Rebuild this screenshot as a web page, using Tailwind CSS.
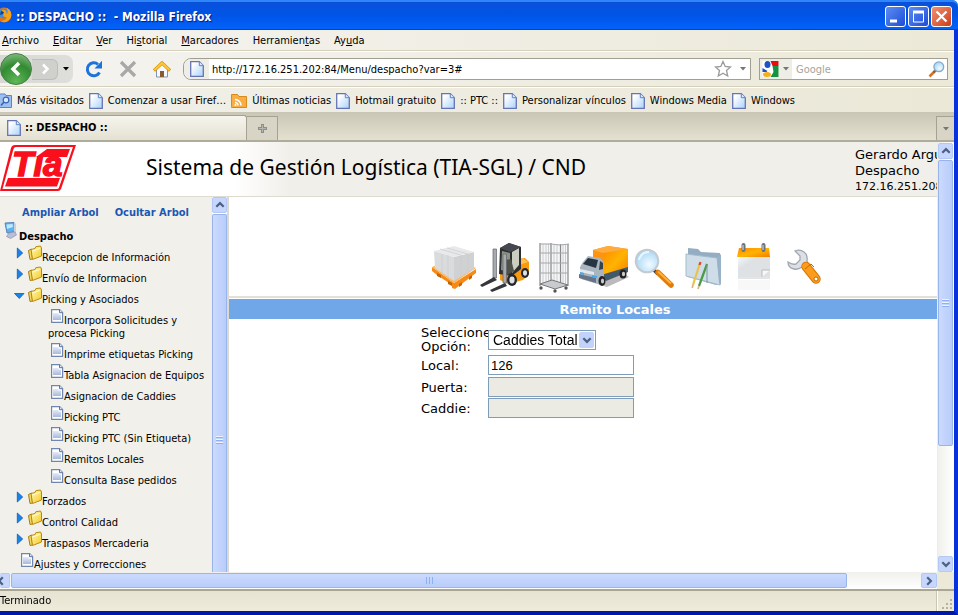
<!DOCTYPE html>
<html lang="es">
<head>
<meta charset="utf-8">
<title>:: DESPACHO ::</title>
<script src="https://cdn.jsdelivr.net/npm/@tailwindcss/browser@4"></script>
</head>
<body class="h-screen overflow-hidden bg-white text-[11px] text-black font-['DejaVu_Sans_Condensed','DejaVu_Sans',sans-serif]">
<svg width="0" height="0" class="absolute" aria-hidden="true">
  <defs>
    <linearGradient id="gPage" x1="0" y1="0" x2="1" y2="1"><stop offset=".2" stop-color="#fff"/><stop offset="1" stop-color="#a9d2fb"/></linearGradient>
    <linearGradient id="gDoc" x1="0" y1="0" x2="0" y2="1"><stop offset="0" stop-color="#e4eaf8"/><stop offset="1" stop-color="#a9b8dc"/></linearGradient>
    <linearGradient id="gFold" x1="0" y1="0" x2="1" y2="1"><stop offset="0" stop-color="#fffbb0"/><stop offset="1" stop-color="#f5c828"/></linearGradient>
    <linearGradient id="gOrange" x1="0" y1="0" x2="1" y2="1"><stop offset="0" stop-color="#ff8a00"/><stop offset=".5" stop-color="#ffb400"/><stop offset="1" stop-color="#f57c00"/></linearGradient>
    <linearGradient id="gGrey" x1="0" y1="0" x2="1" y2="1"><stop offset="0" stop-color="#f8fafb"/><stop offset="1" stop-color="#aab3bb"/></linearGradient>
    <radialGradient id="gLens" cx=".6" cy=".65" r=".7"><stop offset="0" stop-color="#f2fbff"/><stop offset="1" stop-color="#9fd3f5"/></radialGradient>
    <radialGradient id="gBack" cx=".5" cy=".9" r=".9"><stop offset="0" stop-color="#5fb858"/><stop offset=".6" stop-color="#328a32"/><stop offset="1" stop-color="#7fb97c"/></radialGradient>
    <symbol id="page" viewBox="0 0 14 16"><path d="M.7.7h8.600l4 4v10.600H.7z" fill="url(#gPage)" stroke="#6674b4" stroke-width="1.300"/><path d="M9.300.7v4h4" fill="#d9ecff" stroke="#5f86c4"/></symbol>
    <symbol id="doc" viewBox="0 0 16 18"><path d="M3.600 3.600h8l3 3v9.800h-11z" fill="#fff" stroke="#6f86b0" stroke-width="1.200"/><path d="M5 7h5.500v1.500H13V14H5z" fill="url(#gDoc)"/><path d="M11.500 3.500v3.200h3.200" fill="#dfe6f3" stroke="#5c739f"/></symbol>
    <symbol id="folder" viewBox="0 0 16 18"><path d="M2.500 7.500l3-1.500 1 10-2.500.5z" fill="#f4d860" stroke="#a87c10"/><path d="M5 6.500l4-1 .8-1.800L14.500 3l1 2v8l-9 3.500z" fill="url(#gFold)" stroke="#b68a14" stroke-linejoin="round"/><path d="M6.300 8l7.500-2.500" stroke="#fffde0"/></symbol>
    <symbol id="right" viewBox="0 0 16 18"><path d="M7.300 5l5.400 5-5.400 5z" fill="#1685e8" stroke="#1558b8" stroke-width=".8"/></symbol>
    <symbol id="down" viewBox="0 0 16 18"><path d="M4.500 8.500h9.500l-4.700 5z" fill="#1685e8" stroke="#1558b8" stroke-width=".8"/></symbol>
    <symbol id="up" viewBox="0 0 10 10"><path d="M1.300 6.800L5 3.100l3.700 3.700" fill="none" stroke="#4d6185" stroke-width="2.200"/></symbol>
    <symbol id="tri" viewBox="0 0 6 4"><path d="M0 0h6L3 3.500z" fill="currentColor"/></symbol>
  </defs>
</svg>

<div class="flex h-full flex-col">
  <!-- Title bar -->
  <header class="flex h-[30px] shrink-0 items-center rounded-tr-[6px] bg-linear-to-b from-[#0a50d8] via-[#0054e6] to-[#0463fc] pr-[6px] shadow-[inset_0_2px_0_#2f86f8,inset_0_-1px_0_#0046c8]">
    <svg class="h-4 w-3 shrink-0" viewBox="4 0 12 16" aria-hidden="true"><circle cx="8" cy="8" r="7.500" fill="#e8730c"/><circle cx="7.500" cy="6.500" r="5" fill="#3c8edb"/><path d="M6 3c3-1 5 1 4.500 4 2-1 1-5 0-6 4 1 6 6 4 10s-7 5-10 3c4 0 6-2 6-4-2 1-4-1-3-3z" fill="#f5a11c"/><path d="M5 4l3 1-1 2-3 1z" fill="#123f8a"/></svg>
    <h1 class="flex-1 pl-1 pt-1 text-[12px] font-bold leading-4 whitespace-pre text-white [text-shadow:1px_1px_1px_#0a1883]">:: DESPACHO ::  - Mozilla Firefox</h1>
    <div class="flex gap-[2px] pt-[2px]">
      <button aria-label="Minimizar" class="h-[21px] w-[21px] rounded-[3px] border border-white bg-linear-to-br from-[#5d8cf2] to-[#1e4ad8]"><svg viewBox="0 0 19 19"><path d="M4 14h7" stroke="#fff" stroke-width="3"/></svg></button>
      <button aria-label="Maximizar" class="h-[21px] w-[21px] rounded-[3px] border border-white bg-linear-to-br from-[#5d8cf2] to-[#1e4ad8]"><svg viewBox="0 0 19 19"><path d="M4.500 5v10h10V5" fill="none" stroke="#fff"/><path d="M4 5h11" stroke="#fff" stroke-width="3"/></svg></button>
      <button aria-label="Cerrar" class="h-[21px] w-[21px] rounded-[3px] border border-white bg-linear-to-br from-[#f09070] to-[#cc3a10]"><svg viewBox="0 0 19 19"><path d="M4.500 4.500l10 10m0-10l-10 10" stroke="#fff" stroke-width="2.200"/></svg></button>
    </div>
  </header>

  <div class="flex min-h-0 flex-1 flex-col border-r-4 border-b-4 border-r-[#0831d9] border-b-[#0019a8] bg-[#ece9d8]">
    <!-- Menu -->
    <nav class="flex h-[21px] shrink-0 items-center gap-[14px] border-b border-[#d5d0bb] bg-linear-to-r from-[#f4f3f0] to-[#ece9d8] pt-[2px] pl-[2px] leading-[14px]">
      <button><u>A</u>rchivo</button><button><u>E</u>ditar</button><button><u>V</u>er</button><button>Hi<u>s</u>torial</button><button><u>M</u>arcadores</button><button>Herramien<u>t</u>as</button><button>Ay<u>u</u>da</button>
    </nav>

    <!-- Navigation -->
    <div class="flex h-9 shrink-0 items-center border-b border-[#d5d0bb] bg-linear-to-r from-[#f4f3f0] to-[#ece9d8] pt-px pr-[6px] shadow-[inset_0_1px_0_#fff]">
      <div class="flex h-7 w-[73px] items-center rounded-r-lg bg-linear-to-r from-[#d8d8d4] to-[#dededa]">
        <button aria-label="Atrás" class="shrink-0"><svg class="h-8 w-8" viewBox="0 0 32 32"><circle cx="16" cy="16" r="15.500" fill="url(#gBack)" stroke="#4b7f49"/><path d="M19 10l-6 6 6 6" fill="none" stroke="#fff" stroke-width="3.500"/></svg></button>
        <button aria-label="Adelante" class="flex h-[21px] w-[26px] items-center justify-center rounded-r-md border border-l-0 border-[#bdbdb9] bg-[#d0d0cd]"><svg class="h-3 w-3" viewBox="0 0 12 12"><path d="M4 1.500L8.500 6 4 10.500" fill="none" stroke="#fff" stroke-width="2.500"/></svg></button>
        <button aria-label="Páginas recientes" class="flex flex-1 justify-center"><svg class="h-1 w-[6px]"><use href="#tri"/></svg></button>
      </div>
      <div class="flex gap-4 px-3">
        <button aria-label="Recargar"><svg class="h-[18px] w-[18px]" viewBox="0 0 18 18"><path d="M14.500 12.500A6.500 6.500 0 1 1 13 4.300" fill="none" stroke="#1e72dc" stroke-width="3"/><path d="M17 .8v7.700H9.500z" fill="#1e72dc"/></svg></button>
        <button aria-label="Detener"><svg class="h-[18px] w-[18px]" viewBox="0 0 18 18"><path d="M2 2l14 14M16 2L2 16" stroke="#a8a8a8" stroke-width="3.200"/></svg></button>
        <button aria-label="Inicio"><svg class="h-[18px] w-[18px]" viewBox="0 0 18 18"><path d="M3.500 9v8h11V9L9 4z" fill="#f6f9ff" stroke="#8193b8"/><path d="M1 10.500L9 3l8 7.500" fill="none" stroke="#d99500" stroke-width="3.200"/><path d="M1.500 10L9 3l7.500 7" fill="none" stroke="#ffc83a" stroke-width="1.800"/><path d="M7 11h4v6H7z" fill="#8b5a2c"/></svg></button>
      </div>
      <form class="flex h-[22px] flex-1 items-center rounded-l-lg border border-[#a09f92] bg-white">
        <span class="flex h-full w-[25px] shrink-0 items-center justify-center rounded-l-lg bg-[#eeede6]"><svg class="h-4 w-[14px]"><use href="#page"/></svg></span>
        <input aria-label="Dirección" value="http://172.16.251.202:84/Menu/despacho?var=3#" class="h-full min-w-0 flex-1 pl-[3px] outline-none">
        <button type="button" aria-label="Añadir a marcadores"><svg class="h-[18px] w-[18px]" viewBox="0 0 18 18"><path d="M9 1.500l2.200 5 5.300.5-4 3.500 1.200 5.500L9 13.200 4.300 16l1.200-5.500-4-3.500 5.300-.5z" fill="#fff" stroke="#9a9a9a" stroke-width="1.300"/></svg></button>
        <button type="button" aria-label="Historial" class="pr-1 pl-2 text-[#77776f]"><svg class="h-1 w-[6px]"><use href="#tri"/></svg></button>
      </form>
      <form class="ml-2 flex h-[22px] w-[189px] items-center border border-[#a09f92] bg-white">
        <button type="button" aria-label="Motor de búsqueda" class="flex h-full w-8 shrink-0 items-center gap-1 bg-[#eeede6] pl-[2px] text-[#77776f]"><svg class="h-4 w-[17px]" viewBox="0 0 16 16"><path d="M0 0h16v16H0z" fill="#fff"/><path d="M8 0h8v5h-6z" fill="#e90c0c"/><path d="M10 5h6v11H8l3-5z" fill="#159243"/><ellipse cx="5" cy="3.500" rx="3" ry="3.500" fill="#1e50c8"/><path d="M0 7l5 3-1 1H0z" fill="#1e50c8"/><ellipse cx="4.500" cy="13.500" rx="4" ry="2.500" fill="#f3b01a"/><path d="M8 6l2 2-1 4-3-3z" fill="#fff"/></svg><svg class="h-1 w-[6px]"><use href="#tri"/></svg></button>
        <input aria-label="Buscar" placeholder="Google" class="h-full min-w-0 flex-1 pl-1 outline-none placeholder:text-[#a5a59d]">
        <button type="button" aria-label="Buscar" class="pr-[2px]"><svg class="h-[17px] w-[17px]" viewBox="0 0 17 17"><path d="M7 10l-5.500 5.500" stroke="#d0742a" stroke-width="2.600"/><path d="M8 9l-2.500 2.500" stroke="#8a5a34" stroke-width="2"/><circle cx="10.800" cy="5.800" r="4.900" fill="url(#gLens)" stroke="#86a8cc" stroke-width="1.300"/></svg></button>
      </form>
    </div>

    <!-- Bookmarks -->
    <nav class="flex h-[25px] shrink-0 items-center gap-[5px] bg-linear-to-r from-[#f1f0ea] to-[#ebe8d7] pt-[2px] shadow-[inset_0_1px_0_#fff] [&>a]:flex [&>a]:items-center [&>a]:gap-[5px] [&>a]:whitespace-nowrap [&>a]:leading-[14px]">
      <a href="#"><svg class="h-[15px] w-3" viewBox="0 0 12 15"><path d="M-2 1h7l1 1.500h5.500v12H-2z" fill="#9cc0f2" stroke="#5b83cc"/><circle cx="6" cy="7" r="2.800" fill="#d9ebff" stroke="#3d62b0" stroke-width="1.200"/><path d="M4 9l-3 3.500" stroke="#3d62b0" stroke-width="1.600"/></svg>Más visitados</a>
      <a href="#"><svg class="h-4 w-[14px]"><use href="#page"/></svg>Comenzar a usar Firef…</a>
      <a href="#"><svg class="h-[15px] w-4" viewBox="0 0 16 15"><path d="M.5 13.500V1.500h6l1.500 2h7.500v11H.5z" fill="#f8ae42" stroke="#d98a1c"/><path d="M4 6.500a6 6 0 0 1 6 6M4 9.500a3 3 0 0 1 3 3" fill="none" stroke="#fff" stroke-width="1.500"/><circle cx="4.500" cy="12" r="1" fill="#fff"/></svg>Últimas noticias</a>
      <a href="#"><svg class="h-4 w-[14px]"><use href="#page"/></svg>Hotmail gratuito</a>
      <a href="#"><svg class="h-4 w-[14px]"><use href="#page"/></svg>:: PTC ::</a>
      <a href="#"><svg class="h-4 w-[14px]"><use href="#page"/></svg>Personalizar vínculos</a>
      <a href="#"><svg class="h-4 w-[14px]"><use href="#page"/></svg>Windows Media</a>
      <a href="#"><svg class="h-4 w-[14px]"><use href="#page"/></svg>Windows</a>
    </nav>

    <!-- Tabs -->
    <div class="flex h-[30px] shrink-0 items-stretch border-b-2 border-[#b0ac9a] bg-linear-to-b from-[#c9c6b6] to-[#e4e1d1] pt-[3px]">
      <button class="flex w-[247px] items-center gap-1 rounded-tr-[3px] border-t border-r border-[#a5a292] bg-linear-to-b from-[#f6f5ee] to-[#e4e1d2] pl-[7px] font-bold"><svg class="h-4 w-[14px]"><use href="#page"/></svg>:: DESPACHO ::</button>
      <button aria-label="Nueva pestaña" class="mt-px flex w-[31px] items-center justify-center border-t border-r border-[#a5a292] bg-[#d8d5c6]"><svg class="h-[9px] w-[9px]" viewBox="0 0 9 9"><path d="M4.500 0v9M0 4.500h9" stroke="#8d8d8a" stroke-width="3"/><path d="M4.500 1v7M1 4.500h7" stroke="#b5b5b0"/></svg></button>
      <button aria-label="Listar pestañas" class="mt-px ml-auto flex w-[18px] items-center justify-center border-t border-l border-[#a5a292] bg-[#d8d5c6] text-[#77776f]"><svg class="h-1 w-[6px]"><use href="#tri"/></svg></button>
    </div>

    <!-- Page with vertical scrollbar -->
    <div class="flex min-h-0 flex-1">
      <div class="flex min-w-0 flex-1 flex-col bg-white">
        <div class="flex h-[55px] shrink-0 border-b border-[#dedbd0] bg-linear-to-r from-white from-25% to-[#f1efea] to-31%">
          <svg class="mt-[2px] h-[48px] w-[77px] shrink-0" viewBox="0 0 77 48" role="img" aria-label="Tía"><path d="M15 1h61L61 45q-1 2-3 2H0L11 4q1-3 4-3z" fill="#fa0f1c"/><path d="M16 3h57L59 43.500q-.5 1.500-2 1.500H2.500L13.500 5q.5-2 2.500-2z" fill="#fff"/><path d="M47 5h23l-3 8H36z" fill="#fa0f1c"/><path d="M8 34h52l-3 8.500H5z" fill="#fa0f1c"/><text x="12" y="32" font-family="Liberation Sans, sans-serif" font-size="35" font-weight="bold" font-style="italic" fill="#fa0f1c" stroke="#fa0f1c" stroke-width="1.500">Tıa</text></svg>
          <h2 class="flex-1 pt-[9px] pl-[69px] text-[21px] leading-8 whitespace-nowrap font-['Noto_Sans',sans-serif]">Sistema de Gestión Logística (TIA-SGL) / CND</h2>
          <div class="w-[82px] overflow-hidden pt-[5px] text-[13px] leading-4 whitespace-nowrap font-['DejaVu_Sans',sans-serif]"><p>Gerardo Argu</p><p>Despacho</p><p class="text-[11px]">172.16.251.208</p></div>
        </div>
        <div class="flex min-h-0 flex-1">
          <!-- Tree -->
          <aside class="flex w-[229px] shrink-0 border-r-2 border-[#dcd9cf] bg-[#f2f0eb]">
            <div class="min-w-0 flex-1 overflow-hidden pt-px leading-[13px] [&_svg]:inline-block [&_svg]:h-[18px] [&_svg]:w-4 [&_svg]:align-baseline">
              <div class="flex h-[24px] gap-4 pt-2 pl-[22px] font-bold whitespace-nowrap text-[#1a57b4]"><a href="#">Ampliar Arbol</a><a href="#">Ocultar Arbol</a></div>
              <p class="pl-[3px] font-bold"><svg viewBox="0 0 16 18"><path d="M2 1l9-.500 1 9-8 1.500z" fill="#58b4f0" stroke="#5a84b8"/><path d="M3.500 2.500l6-.500.5 3-6 2z" fill="#bfe8ff"/><path d="M11 .8l2 1v10l-2-2z" fill="#c8d0e0"/><path d="M6 11l6-1 1.500 3-6 3.500-4-2z" fill="#b9bfd6" stroke="#8c92b0" stroke-width=".7"/></svg>Despacho</p>
              <ul class="whitespace-nowrap">
                <li class="pl-[10px]"><svg><use href="#right"/></svg><svg><use href="#folder"/></svg><a href="#">Recepcion de Información</a></li>
                <li class="pl-[10px]"><svg><use href="#right"/></svg><svg><use href="#folder"/></svg><a href="#">Envío de Informacion</a></li>
                <li><div class="pl-[10px]"><svg><use href="#down"/></svg><svg><use href="#folder"/></svg><a href="#">Picking y Asociados</a></div>
                  <ul class="pl-12">
                    <li><svg><use href="#doc"/></svg><a href="#">Incorpora Solicitudes y<br>procesa Picking</a></li>
                    <li><svg><use href="#doc"/></svg><a href="#">Imprime etiquetas Picking</a></li>
                    <li><svg><use href="#doc"/></svg><a href="#">Tabla Asignacion de Equipos</a></li>
                    <li><svg><use href="#doc"/></svg><a href="#">Asignacion de Caddies</a></li>
                    <li><svg><use href="#doc"/></svg><a href="#">Picking PTC</a></li>
                    <li><svg><use href="#doc"/></svg><a href="#">Picking PTC (Sin Etiqueta)</a></li>
                    <li><svg><use href="#doc"/></svg><a href="#">Remitos Locales</a></li>
                    <li><svg><use href="#doc"/></svg><a href="#">Consulta Base pedidos</a></li>
                  </ul></li>
                <li class="pl-[10px]"><svg><use href="#right"/></svg><svg><use href="#folder"/></svg><a href="#">Forzados</a></li>
                <li class="pl-[10px]"><svg><use href="#right"/></svg><svg><use href="#folder"/></svg><a href="#">Control Calidad</a></li>
                <li class="pl-[10px]"><svg><use href="#right"/></svg><svg><use href="#folder"/></svg><a href="#">Traspasos Mercaderia</a></li>
                <li class="pl-[18px]"><svg><use href="#doc"/></svg><a href="#">Ajustes y Correcciones</a></li>
              </ul>
            </div>
            <div class="flex w-4 shrink-0 flex-col gap-px border-l border-[#eeede5] bg-white">
              <button aria-label="Subir" class="flex h-4 items-center justify-center rounded-[2px] border border-[#b4c8f6] bg-[#c6d6fd]"><svg class="h-[10px] w-[10px]"><use href="#up"/></svg></button>
              <div class="flex flex-1 flex-col items-center justify-center gap-px rounded-t-[2px] border border-b-0 border-[#98b4ea] bg-linear-to-r from-[#cbdafe] to-[#b8cdfa] pt-[92px]"><i class="h-px w-[7px] bg-[#eef4fe] shadow-[0_1px_0_#8cb0f8]"></i><i class="mt-px h-px w-[7px] bg-[#eef4fe] shadow-[0_1px_0_#8cb0f8]"></i><i class="mt-px h-px w-[7px] bg-[#eef4fe] shadow-[0_1px_0_#8cb0f8]"></i></div>
            </div>
          </aside>

          <!-- Work area -->
          <main class="min-w-0 flex-1 font-['DejaVu_Sans',sans-serif] text-[13px]">
            <div class="mb-px flex h-[101px] gap-[3px] border-b-2 border-[#e2e0d8] pt-[41px] pl-[201px] [&_svg]:h-12 [&_svg]:w-12 [&_svg]:overflow-visible">
              <button aria-label="Pallets"><svg viewBox="0 0 48 48"><path d="M2 24l22 16 22-14v4L25 46l-3-1v-3L7 32l-5-4z" fill="#f58a16"/><path d="M2 24l20-8 24 9-22 15z" fill="#ffb45c"/><path d="M7 30v3l4 2v-3zm11 8v3l4 2v-3zm11 3v3l3-2v-3zm10-7v3l3-2v-3z" fill="#c86400"/><path d="M4 8l20 6v24L5 25z" fill="#d9dbdc"/><path d="M24 14l20-5v17L24 38z" fill="#cfd1d3"/><path d="M4 8L24 3l20 6-20 5z" fill="#e8e9ea"/><path d="M10 6l21 6M17 5l21 6M12 11v19M18 12v22M31 12v21M38 11v18" stroke="#cacccf" stroke-width=".7" fill="none"/></svg></button>
              <button aria-label="Montacargas"><svg viewBox="0 0 48 48"><path d="M28 17l16-2 4 4v12l-6 6-15 4-8-4V27z" fill="#f79a10"/><path d="M28 18l15-2 4 3-15 5z" fill="#ffc250"/><path d="M19 5L28 0l12 4v22l-9 7-13-2z" fill="#2c2e33"/><path d="M21 8l8 2v19l-9-2z" fill="#8d9480"/><path d="M31 9l7-4v17l-7 8z" fill="#c9cec0"/><path d="M24 17l6-1 3 12-7 4z" fill="#4d5149"/><path d="M19 5l10 4 11-5-12-4z" fill="#45484e"/><ellipse cx="31" cy="37" rx="5" ry="6" fill="#26272a"/><ellipse cx="31" cy="37" rx="2.600" ry="3.400" fill="#dfe2e4"/><ellipse cx="44" cy="30" rx="4" ry="5" fill="#26272a"/><ellipse cx="44" cy="30" rx="2" ry="2.800" fill="#dfe2e4"/><path d="M12 6h3.500v29H12zM22 11h3.500v29H22z" fill="#a7abb0" stroke="#62656a" stroke-width=".7"/><path d="M13 34L-1 42l2 2 15-7zM24 40l-15 7 2 2 15-6z" fill="#33363b"/></svg></button>
              <button aria-label="Caddies"><svg viewBox="0 0 48 48"><path d="M8 0h11v41H8zM19 1h10v38H19zM29 1h7v42h-7z" fill="#f5f6f6"/><path d="M8 0v43M19 0v44M28.500 1v44M36 1v42" stroke="#85888a" stroke-width="1.200"/><path d="M11 1v40M14 1v40M16.500 1v40M22 2v38M25 2v38M31 2v40M33.500 2v40" stroke="#c0c3c5" stroke-width=".8"/><path d="M8 1h11l9 1 9-1M8 10h28M8 20h28M8 30h28" stroke="#a4a7a9" fill="none"/><path d="M8 41l12-4 16 5-13 4z" fill="#c8cbcd" stroke="#777"/><circle cx="9" cy="45" r="1.700" fill="#555"/><circle cx="23" cy="48" r="1.700" fill="#555"/><circle cx="34" cy="45" r="1.700" fill="#555"/></svg></button>
              <button aria-label="Transporte"><svg viewBox="0 0 48 48"><path d="M-2 36l26 8 22-10-6-4z" fill="#bbb"/><path d="M10 7L25 3l20 3v20L20 34 10 26z" fill="#ff9412"/><path d="M20 10l25-4v20l-24 7z" fill="url(#gOrange)"/><path d="M10 7l15-4 20 3-25 4z" fill="#ffab3d"/><path d="M18 32l27-8v5l-22 9z" fill="#43586a"/><path d="M-3 24l3-5 5-6 12 2 4 4v17l-5 5-19-6z" fill="#aab5c0"/><path d="M0 21l5-6 10 2-2 8z" fill="#273542"/><path d="M17 18l3 2v6l-4 1z" fill="#34444f"/><path d="M-3 26l14 3v3l-14-3z" fill="#e3e8ec"/><path d="M-4 31l17 4v5l-17-5z" fill="#667585"/><path d="M-3 29l4 1v2l-4-1zm12 3l5 1v2l-5-1z" fill="#4aa8f0"/><ellipse cx="19" cy="38" rx="3.500" ry="5" fill="#222"/><ellipse cx="19.500" cy="38" rx="1.600" ry="2.600" fill="#ccc"/><ellipse cx="40" cy="31" rx="3.500" ry="4.500" fill="#222"/><ellipse cx="40.500" cy="31" rx="1.600" ry="2.200" fill="#ccc"/></svg></button>
              <button aria-label="Consultas"><svg viewBox="0 0 48 48"><path d="M20 27l4 4" stroke="#333" stroke-width="3.500"/><path d="M24 29.500l13 12.500" stroke="#e27c08" stroke-width="5.500" stroke-linecap="round"/><path d="M24 28.500l13 12" stroke="#ffb13d" stroke-width="2"/><circle cx="13" cy="18" r="11.300" fill="url(#gLens)" stroke="#c3cad0" stroke-width="2"/><path d="M5 17q2-8 10-8" fill="none" stroke="#e9f8ff" stroke-width="2"/></svg></button>
              <button aria-label="Documentos"><svg viewBox="0 0 48 48"><path d="M3 5l10 1 3 3 19 1v30l-4 2L3 34z" fill="#94adc3"/><path d="M1 11l31 4 3 27-34-9z" fill="#cfdde9" stroke="#a4bbcc"/><path d="M32 15l4-4v31l-2-2z" fill="#9ab2c6"/><path d="M15 20L8 42" stroke="#e8c34c" stroke-width="2.200"/><path d="M15.500 19l-1 3" stroke="#e04530" stroke-width="2.200"/><path d="M22 21l-8 22" stroke="#4a9b42" stroke-width="2.200"/><path d="M8 42l-.800 3M14 43l-1 3" stroke="#d9b582" stroke-width="1.800"/><path d="M22 22v18" stroke="#7d96aa"/></svg></button>
              <button aria-label="Calendario"><svg viewBox="0 0 48 48"><path d="M2 37h32v10H2z" fill="#f8f8f8"/><path d="M2 13h32v21H2z" fill="url(#gGrey)"/><path d="M2 25q12 0 19-12h13v21H2z" fill="#dfe2e4"/><path d="M26 34v-7h8" fill="#f8f8f8" stroke="#bbb"/><path d="M3 5h30l1 9H1z" fill="url(#gOrange)"/><path d="M2 35h32" stroke="#c8cacc"/><path d="M7.500 2v5M27.500 2v5" stroke="#6d7378" stroke-width="4" stroke-linecap="round"/><path d="M7 2v5M27 2v5" stroke="#b6bcc0" stroke-width="1.500"/></svg></button>
              <button aria-label="Herramientas"><svg viewBox="0 0 48 48"><path d="M1 19q0 6 6 7 4 1 8-2l4 1 2-4-1-3q1-6-3-9-4-3-9-1l5 5v4l-4 4q-4 1-8-2z" fill="#dcdfe5" stroke="#a3a7af" stroke-width="1.300"/><path d="M19 23.500L29 36" stroke="#d97600" stroke-width="9.500" stroke-linecap="round"/><path d="M19 23.500L29 36" stroke="#fb9c1c" stroke-width="7.500" stroke-linecap="round"/><path d="M18 26l6-5 3 3" stroke="#c46a00" fill="none"/><circle cx="29" cy="36" r="2" fill="#fff" stroke="#c46a00"/></svg></button>
            </div>
            <h3 class="flex h-5 items-center justify-center bg-[#6fa7e9] pt-px pl-16 font-bold text-white">Remito Locales</h3>
            <form class="grid grid-cols-[67px_146px] items-center gap-y-px pt-[6px] pl-48 [&>label]:pt-px">
              <label for="opcion" class="leading-[14px]">Seleccione Opción:</label>
              <div class="relative w-[108px]">
                <select id="opcion" class="block h-5 w-full appearance-none border border-[#7f9db9] bg-white pl-1 text-[14px] leading-4 font-['Liberation_Sans',sans-serif]"><option>Caddies Total</option></select>
                <span class="pointer-events-none absolute top-[2px] right-[2px] flex h-4 w-[15px] items-center justify-center rounded-[2px] bg-[#c1d3fb]"><svg class="h-[10px] w-[10px] rotate-180"><use href="#up"/></svg></span>
              </div>
              <label for="local">Local:</label>
              <input id="local" value="126" autofocus class="h-5 border border-[#7f9db9] bg-white pl-[2px] text-[13px] outline-none font-['Liberation_Sans',sans-serif]">
              <label for="puerta">Puerta:</label>
              <input id="puerta" disabled class="h-5 border border-[#7f9db9] bg-[#ebebe4]">
              <label for="caddie">Caddie:</label>
              <input id="caddie" disabled class="h-5 border border-[#7f9db9] bg-[#ebebe4]">
            </form>
          </main>
        </div>
      </div>
      <div class="flex w-[17px] shrink-0 flex-col gap-px border-l border-[#eeede5] bg-linear-to-r from-[#f0f0ec] to-white pt-px pr-px">
        <button aria-label="Subir" class="flex h-4 items-center justify-center rounded-[2px] border border-[#b4c8f6] bg-[#c6d6fd]"><svg class="h-[10px] w-[10px]"><use href="#up"/></svg></button>
        <div class="flex basis-2/3 flex-col items-center justify-center gap-px rounded-[2px] border border-[#98b4ea] bg-linear-to-r from-[#cbdafe] to-[#b8cdfa]"><i class="h-px w-[7px] bg-[#eef4fe] shadow-[0_1px_0_#8cb0f8]"></i><i class="mt-px h-px w-[7px] bg-[#eef4fe] shadow-[0_1px_0_#8cb0f8]"></i><i class="mt-px h-px w-[7px] bg-[#eef4fe] shadow-[0_1px_0_#8cb0f8]"></i></div>
        <button aria-label="Bajar" class="mt-auto flex h-4 items-center justify-center rounded-[2px] border border-[#b4c8f6] bg-[#c6d6fd]"><svg class="h-[10px] w-[10px] rotate-180"><use href="#up"/></svg></button>
      </div>
    </div>

    <!-- Horizontal scrollbar -->
    <div class="flex h-[17px] shrink-0 bg-linear-to-b from-[#f0f0ec] to-white">
      <button aria-label="Izquierda" class="my-px flex w-[10px] items-center rounded-[2px] border border-l-0 border-[#b4c8f6] bg-[#c6d6fd]"><svg class="-ml-1 h-[10px] w-[10px] shrink-0 -rotate-90"><use href="#up"/></svg></button>
      <div class="my-px ml-px flex basis-[836px] items-center justify-center gap-[2px] rounded-[2px] border border-[#98b4ea] bg-linear-to-b from-[#cbdafe] to-[#b8cdfa]"><i class="h-[7px] w-px bg-[#8cb0f8]"></i><i class="h-[7px] w-px bg-[#8cb0f8]"></i><i class="h-[7px] w-px bg-[#8cb0f8]"></i></div>
      <button aria-label="Derecha" class="my-px ml-auto flex w-4 items-center justify-center rounded-[2px] border border-[#b4c8f6] bg-[#c6d6fd]"><svg class="h-[10px] w-[10px] rotate-90"><use href="#up"/></svg></button>
      <span class="w-[17px] bg-[#ece9d8]"></span>
    </div>

    <!-- Status bar -->
    <footer class="flex h-[22px] shrink-0 items-center border-t-2 border-[#a9a694] bg-linear-to-b from-[#e6e3d2] to-[#eeebdb]">
      <p class="flex-1">Terminado</p>
      <span class="flex h-full w-[17px] items-end border-l border-white shadow-[-1px_0_0_#c9c6b4]"><svg class="h-4 w-4" viewBox="0 0 16 16"><path d="M12 4h2v2h-2zM12 8h2v2h-2zM8 8h2v2H8zM12 12h2v2h-2zM8 12h2v2H8zM4 12h2v2H4z" fill="#b5b29e"/></svg></span>
    </footer>
  </div>
</div>
<script>
  const local = document.getElementById('local');
  local.focus();
  local.setSelectionRange(3, 3);
</script>
</body>
</html>
